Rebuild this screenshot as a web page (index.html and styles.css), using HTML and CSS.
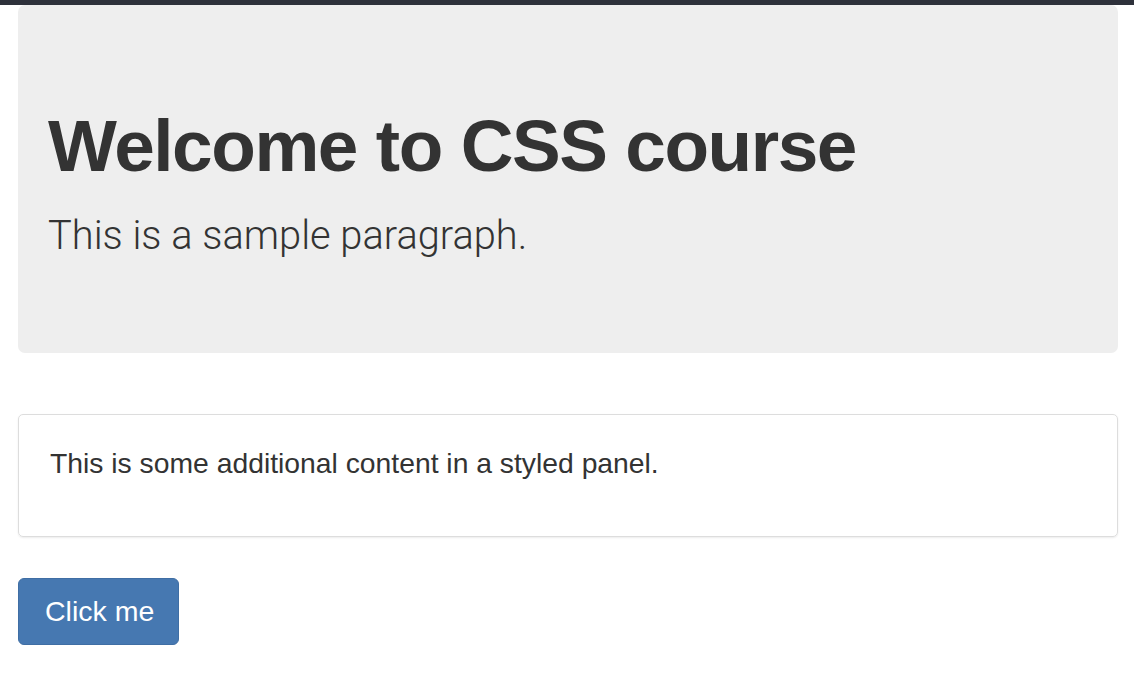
FILE: index.html
```html
<!DOCTYPE html>
<html lang="en">
<head>
<meta charset="utf-8">
<title>CSS course</title>
<link rel="stylesheet" href="styles.css">
</head>
<body>
<div class="topbar"></div>
<main class="container">
  <section class="jumbotron">
    <h1 class="jumbo-title">Welcome to CSS course</h1>
    <p class="jumbo-lead">This is a sample paragraph.</p>
  </section>
  <section class="panel">
    <p class="panel-text">This is some additional content in a styled panel.</p>
  </section>
  <button class="btn-primary" type="button">Click me</button>
</main>
</body>
</html>
```

FILE: styles.css
```css
html, body {
  margin: 0;
  padding: 0;
  background: #ffffff;
}
body {
  font-family: "Liberation Sans", Arial, sans-serif;
  color: #333333;
}
.topbar {
  height: 5px;
  background: #2e313b;
}
.container {
  padding: 0 16px 0 18px;
  display: flex;
  flex-direction: column;
  align-items: flex-start;
}
.jumbotron {
  align-self: stretch;
  background: #eeeeee;
  border-radius: 7px;
  padding: 100px 30px 88px 30px;
}
.jumbo-title {
  margin: 0 0 21px 0;
  font-family: "Liberation Sans", Arial, sans-serif;
  font-weight: 700;
  font-size: 73px;
  line-height: 1.115;
  letter-spacing: -1.45px;
  color: #333333;
}
.jumbo-lead {
  margin: 0;
  font-family: Roboto, "Liberation Sans", sans-serif;
  font-weight: 300;
  font-size: 39.8px;
  line-height: 1.44;
  color: #333333;
}
.panel {
  align-self: stretch;
  margin-top: 61px;
  border: 1px solid #dddddd;
  border-radius: 5px;
  box-shadow: 0 1px 2px rgba(0, 0, 0, 0.08);
  padding: 29px 30px 54px 31px;
}
.panel-text {
  margin: 0;
  font-size: 28.3px;
  line-height: 38px;
  color: #333333;
}
.btn-primary {
  margin-top: 41px;
  height: 67px;
  padding: 0 24px 0 26px;
  background: #4678b1;
  border: 1px solid #3f6ea4;
  border-radius: 6px;
  color: #ffffff;
  font-family: "Liberation Sans", Arial, sans-serif;
  font-size: 28.5px;
  line-height: 1;
  cursor: pointer;
}
```
